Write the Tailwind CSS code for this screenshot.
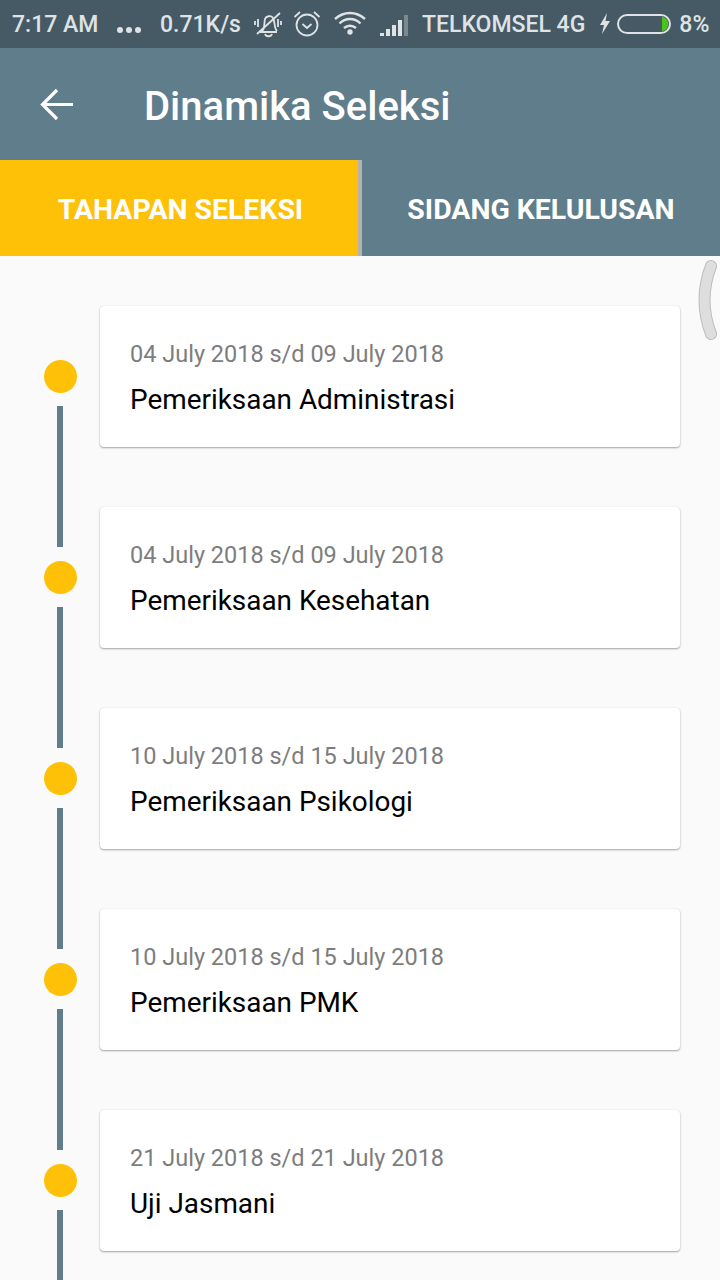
<!DOCTYPE html>
<html><head><meta charset="utf-8"><script src="https://cdn.jsdelivr.net/npm/@tailwindcss/browser@4"></script></head>
<body class="m-0 bg-[#fafafa]">
<div class="relative w-[720px] h-[1280px] overflow-hidden font-['Roboto',sans-serif] bg-[#fafafa]">
  <div class="h-12 bg-[#455a64] flex items-center text-[#dfe3e5] font-medium text-[23px] relative pt-[3px]">
    <span class="ml-3 w-[100px] whitespace-nowrap">7:17 AM</span>
    <span class="ml-[5px] flex gap-[3px] items-center mt-[9px]"><i class="block w-[6px] h-[6px] rounded-full bg-[#dfe3e5]"></i><i class="block w-[6px] h-[6px] rounded-full bg-[#dfe3e5]"></i><i class="block w-[6px] h-[6px] rounded-full bg-[#dfe3e5]"></i></span>
    <span class="ml-[19px] whitespace-nowrap">0.71K/s</span>
    <svg class="ml-[12px] -mt-[3px]" width="30" height="30" viewBox="0 0 30 30" fill="none" stroke="#dfe3e5" stroke-width="1.800"><path d="M7 23h17M9 22c3-2 2-8 3-12 1-3 6-4 8-1 2 3 1 10 4 13M12 25c1 3 6 3 7 0"/><path d="M4 25 27 4"/><path d="M5 10v8M2 12v4M25 10v8M28 12v4"/></svg>
    <svg class="ml-[10px] -mt-[3px]" width="28" height="30" viewBox="0 0 28 30" fill="none" stroke="#dfe3e5" stroke-width="1.800"><circle cx="14" cy="16" r="10.500"/><path d="m9.500 15 4.500 4 4.500-4M1.500 8l5.500-5M26.500 8 21 3"/></svg>
    <svg class="ml-[13px] -mt-[3px]" width="32" height="26" viewBox="0 0 32 26" fill="none" stroke="#dfe3e5" stroke-width="2.400"><path d="M1 8c9-8 21-8 30 0M5.500 12.500c6-6 15-6 21 0M10 17c3.500-3 8.500-3 12 0"/><circle cx="16" cy="21" r="2.700" fill="#dfe3e5" stroke="none"/></svg>
    <svg class="ml-[13px] -mt-[2px]" width="30" height="24" viewBox="0 0 30 24" fill="#dfe3e5"><path d="M1 20h4v3H1zM7 16h4v7H7zM13 12h4v11h-4zM19 7h4v16h-4z"/><path d="M25 2h4v21h-4z" opacity=".35"/></svg>
    <span class="ml-[13px] whitespace-nowrap">TELKOMSEL 4G</span>
    <svg class="ml-[14px] -mt-[3px]" width="12" height="22" viewBox="0 0 12 22" fill="#dfe3e5"><path d="M8 0 1 12h4l-2 9 8-13H6.500z"/></svg>
    <div class="ml-[6px] -mt-[3px] w-[54px] h-[20px] rounded-[10px] border-2 border-[#dfe3e5] flex justify-end items-center pr-[1px]"><i class="block w-[6px] h-[14px] rounded-r-[7px] bg-[#4cc417]"></i></div>
    <span class="ml-[8px] whitespace-nowrap">8%</span>
  </div>
  <div class="h-[112px] bg-[#607d8b] flex items-center text-white">
    <svg class="ml-[40px]" width="33" height="33" viewBox="0 0 33 33" fill="none" stroke="#fff" stroke-width="3.200"><path d="M33 16.500H3M17 2 2.500 16.500 17 31"/></svg>
    <span class="ml-[71px] mt-[6px] text-[40px] leading-[48px] font-medium whitespace-nowrap">Dinamika Seleksi</span>
  </div>
  <div class="h-24 flex text-white font-bold text-[28.400px]">
    <div class="w-[358px] pt-[5px] pl-[3px] bg-[#ffc107] flex items-center justify-center whitespace-nowrap">TAHAPAN SELEKSI</div>
    <div class="w-1 bg-[#b3b3b3]"></div>
    <div class="flex-1 pt-[5px] bg-[#607d8b] flex items-center justify-center whitespace-nowrap">SIDANG KELULUSAN</div>
  </div>
  <div class="flex pt-[50px]">
    <div class="w-[100px] shrink-0 pl-[20px] flex flex-col items-center pt-[54px]">
      <i class="block w-[33px] h-[33px] rounded-full bg-[#ffc107] shrink-0"></i><i class="block w-[6px] h-[141px] mt-[13px] mb-[14px] bg-[#607d8b] shrink-0"></i>
      <i class="block w-[33px] h-[33px] rounded-full bg-[#ffc107] shrink-0"></i><i class="block w-[6px] h-[141px] mt-[13px] mb-[14px] bg-[#607d8b] shrink-0"></i>
      <i class="block w-[33px] h-[33px] rounded-full bg-[#ffc107] shrink-0"></i><i class="block w-[6px] h-[141px] mt-[13px] mb-[14px] bg-[#607d8b] shrink-0"></i>
      <i class="block w-[33px] h-[33px] rounded-full bg-[#ffc107] shrink-0"></i><i class="block w-[6px] h-[141px] mt-[13px] mb-[14px] bg-[#607d8b] shrink-0"></i>
      <i class="block w-[33px] h-[33px] rounded-full bg-[#ffc107] shrink-0"></i><i class="block w-[6px] h-[141px] mt-[13px] mb-[14px] bg-[#607d8b] shrink-0"></i>
    </div>
    <div class="w-[580px] flex flex-col gap-[60px]">
      <div class="h-[141px] bg-white rounded-[4px] shadow-[0_1px_2px_rgba(0,0,0,0.35),0_0_1px_rgba(0,0,0,0.12)] pl-[30px] pt-[33px]"><p class="text-[23.500px] leading-[30px] text-[#7d7d7d]">04 July 2018 s/d 09 July 2018</p><p class="text-[27.900px] leading-[36px] mt-[13px] text-black">Pemeriksaan Administrasi</p></div>
      <div class="h-[141px] bg-white rounded-[4px] shadow-[0_1px_2px_rgba(0,0,0,0.35),0_0_1px_rgba(0,0,0,0.12)] pl-[30px] pt-[33px]"><p class="text-[23.500px] leading-[30px] text-[#7d7d7d]">04 July 2018 s/d 09 July 2018</p><p class="text-[27.900px] leading-[36px] mt-[13px] text-black">Pemeriksaan Kesehatan</p></div>
      <div class="h-[141px] bg-white rounded-[4px] shadow-[0_1px_2px_rgba(0,0,0,0.35),0_0_1px_rgba(0,0,0,0.12)] pl-[30px] pt-[33px]"><p class="text-[23.500px] leading-[30px] text-[#7d7d7d]">10 July 2018 s/d 15 July 2018</p><p class="text-[27.900px] leading-[36px] mt-[13px] text-black">Pemeriksaan Psikologi</p></div>
      <div class="h-[141px] bg-white rounded-[4px] shadow-[0_1px_2px_rgba(0,0,0,0.35),0_0_1px_rgba(0,0,0,0.12)] pl-[30px] pt-[33px]"><p class="text-[23.500px] leading-[30px] text-[#7d7d7d]">10 July 2018 s/d 15 July 2018</p><p class="text-[27.900px] leading-[36px] mt-[13px] text-black">Pemeriksaan PMK</p></div>
      <div class="h-[141px] bg-white rounded-[4px] shadow-[0_1px_2px_rgba(0,0,0,0.35),0_0_1px_rgba(0,0,0,0.12)] pl-[30px] pt-[33px]"><p class="text-[23.500px] leading-[30px] text-[#7d7d7d]">21 July 2018 s/d 21 July 2018</p><p class="text-[27.900px] leading-[36px] mt-[13px] text-black">Uji Jasmani</p></div>
    </div>
  </div>
  <svg class="absolute left-[694px] top-[256px]" width="26" height="90" viewBox="0 0 26 90" fill="none"><path d="M17 10Q4 44 17 78" stroke="#bdbdbd" stroke-width="12" stroke-linecap="round"/><path d="M17 10Q4 44 17 78" stroke="#dedede" stroke-width="10" stroke-linecap="round"/></svg>
</div>
</body></html>
